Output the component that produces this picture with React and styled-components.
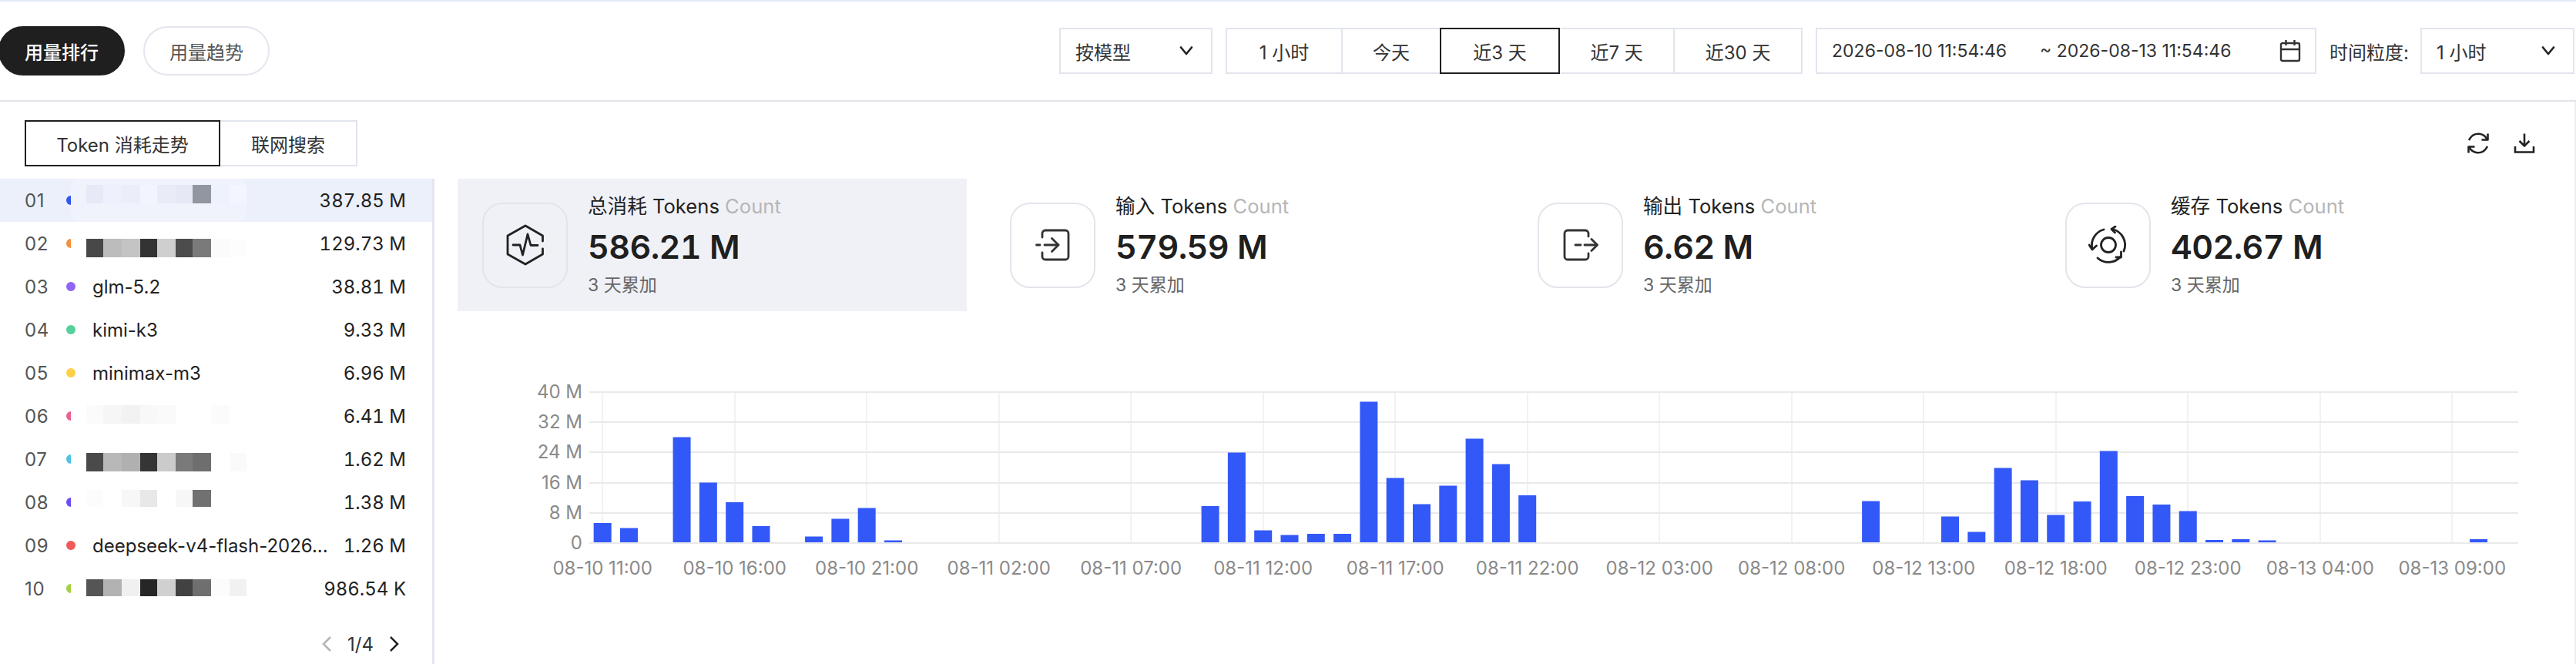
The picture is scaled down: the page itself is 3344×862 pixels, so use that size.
import React from "react";
import styled, { createGlobalStyle } from "styled-components";

const Global = createGlobalStyle`
  html, body { margin: 0; padding: 0; background: #fff; }
  body {
    font-family: Inter, "Noto Sans CJK SC", "Noto Sans", sans-serif;
    color: #222;
    overflow: hidden;
  }
  * { box-sizing: border-box; }
`;

const Page = styled.div`
  width: 3344px;
  height: 862px;
  overflow: hidden;
  border-top: 2px solid #e0e9fb;
  display: flex;
  flex-direction: column;
`;

const Header = styled.header`
  height: 130px;
  flex: none;
  border-bottom: 2px solid #e2e4ea;
  display: flex;
  align-items: center;
  padding-right: 2px;
`;

const PillGroup = styled.div`
  display: flex;
  gap: 24px;
  margin-left: -2px;
`;

const Pill = styled.div`
  width: 164px;
  height: 64px;
  border-radius: 32px;
  display: flex;
  align-items: center;
  justify-content: center;
  font-size: 24px;
  font-weight: ${(p) => (p.$active ? 500 : 400)};
  background: ${(p) => (p.$active ? "#1f1f1f" : "#fff")};
  color: ${(p) => (p.$active ? "#fff" : "#555")};
  border: 2px solid ${(p) => (p.$active ? "#1f1f1f" : "#e3e6ee")};
`;

const Controls = styled.div`
  margin-left: auto;
  display: flex;
  align-items: center;
`;

const SelectBox = styled.div`
  height: 60px;
  width: ${(p) => p.$width}px;
  border: 2px solid #e2e5ee;
  display: flex;
  align-items: center;
  justify-content: space-between;
  padding: 0 22px 0 19px;
  font-size: 24px;
  color: #333;
  margin-right: ${(p) => p.$mr || 0}px;
`;

const Segmented = styled.div`
  display: flex;
  height: 60px;
  margin-right: 17px;
`;

const Segment = styled.div`
  height: 60px;
  width: ${(p) => p.$width}px;
  margin-left: ${(p) => (p.$first ? 0 : -2)}px;
  position: relative;
  z-index: ${(p) => (p.$active ? 1 : 0)};
  display: flex;
  align-items: center;
  justify-content: center;
  font-size: 24px;
  color: #333;
  border: 2px solid ${(p) => (p.$active ? "#1f1f1f" : "#e2e5ee")};
`;

const DateRange = styled.div`
  width: 650px;
  height: 60px;
  border: 2px solid #e2e5ee;
  display: flex;
  align-items: center;
  padding-left: 19px;
  font-size: 23px;
  color: #333;
  margin-right: 17px;
`;

const DateText = styled.span`
  width: ${(p) => p.$width}px;
  flex: none;
  white-space: pre;
`;

const CalendarSlot = styled.span`
  margin-left: auto;
  margin-right: 18px;
  display: flex;
`;

const FieldLabel = styled.span`
  font-size: 24px;
  color: #333;
  margin-right: 15px;
  white-space: nowrap;
`;

const Body = styled.div`
  flex: 1;
  min-height: 0;
  display: flex;
  flex-direction: column;
  border-right: 2px solid #eceef2;
`;

const Toolbar = styled.div`
  height: 100px;
  flex: none;
  padding: 24px 51px 16px 32px;
  display: flex;
  align-items: center;
  justify-content: space-between;
`;

const Tabs = styled.div`
  display: flex;
`;

const Tab = styled.div`
  height: 60px;
  width: ${(p) => p.$width}px;
  margin-left: ${(p) => (p.$first ? 0 : -2)}px;
  position: relative;
  z-index: ${(p) => (p.$active ? 1 : 0)};
  display: flex;
  align-items: center;
  justify-content: center;
  font-size: 24px;
  color: #333;
  border: 2px solid ${(p) => (p.$active ? "#1f1f1f" : "#e2e5ee")};
`;

const Actions = styled.div`
  display: flex;
  align-items: center;
  gap: 31px;
`;

const Content = styled.div`
  flex: 1;
  min-height: 0;
  display: flex;
`;

const Sidebar = styled.aside`
  width: 564px;
  flex: none;
  border-right: 3px solid #e4e7ef;
  display: flex;
  flex-direction: column;
`;

const Row = styled.div`
  height: 56px;
  flex: none;
  position: relative;
  padding: 0 34px 0 32px;
  display: flex;
  align-items: center;
  font-size: 24px;
  background: ${(p) => (p.$active ? "#ecf0fb" : "transparent")};
`;

const Rank = styled.span`
  width: 54px;
  flex: none;
  color: #555;
  letter-spacing: 0.7px;
`;

const Dot = styled.span`
  width: 12px;
  height: 12px;
  flex: none;
  border-radius: 50%;
  background: ${(p) => p.$color};
  margin-right: 22px;
`;

const Name = styled.span`
  flex: none;
  color: #222;
  white-space: nowrap;
`;

const Value = styled.span`
  margin-left: auto;
  color: #222;
  white-space: nowrap;
  font-variant-numeric: tabular-nums;
`;

const MosaicLayer = styled.svg`
  position: absolute;
  left: 92px;
  top: 0;
  overflow: visible;
`;

const Pager = styled.div`
  height: 88px;
  flex: none;
  display: flex;
  align-items: center;
  justify-content: flex-end;
  padding-right: 42px;
  gap: 20px;
  font-size: 24px;
  color: #333;
`;

const Main = styled.main`
  flex: 1;
  min-width: 0;
  padding: 0 32px 0 30px;
  display: flex;
  flex-direction: column;
`;

const Cards = styled.div`
  display: grid;
  grid-template-columns: repeat(4, 1fr);
  gap: 24px;
`;

const Card = styled.div`
  height: 172px;
  padding: 0 32px;
  display: flex;
  align-items: center;
  gap: 26px;
  background: ${(p) => (p.$active ? "#f0f1f7" : "transparent")};
`;

const IconBox = styled.div`
  width: 111px;
  height: 111px;
  flex: none;
  border: 2px solid ${(p) => (p.$active ? "#e3e4ea" : "#e4e5ec")};
  border-radius: 26px;
  display: flex;
  align-items: center;
  justify-content: center;
`;

const CardText = styled.div`
  display: flex;
  flex-direction: column;
`;

const CardTitle = styled.div`
  font-size: 25.6px;
  line-height: 36px;
  color: #222;
  white-space: nowrap;
`;

const Muted = styled.span`
  color: #b6b6b6;
`;

const CardValue = styled.div`
  font-size: 43px;
  line-height: 56px;
  letter-spacing: -0.6px;
  margin-top: 6px;
  font-weight: 600;
  font-variant-numeric: tabular-nums;
  color: #1f1f1f;
  white-space: nowrap;
`;

const CardSub = styled.div`
  font-size: 23px;
  line-height: 34px;
  margin-top: 5px;
  color: #666;
`;

const ChartSvg = styled.svg`
  display: block;
  flex: none;
  font-family: Inter, "Noto Sans", sans-serif;
`;

const ChevronDown = () => (
  <svg width="20" height="14" viewBox="0 0 20 14" fill="none" stroke="#222" strokeWidth="2.6" strokeLinecap="round" strokeLinejoin="round">
    <path d="M3 2.5 L10 11 L17 2.5" />
  </svg>
);

const Calendar = () => (
  <svg width="28" height="30" viewBox="0 0 28 30" fill="none" stroke="#333" strokeWidth="2.4">
    <rect x="2" y="5" width="24" height="23" rx="2" />
    <path d="M2 13 H26 M8.5 1 V8 M19.5 1 V8" />
  </svg>
);

const Refresh = () => (
  <svg width="30" height="30" viewBox="0 0 30 30" fill="none" stroke="#222" strokeWidth="2.6" strokeLinejoin="round">
    <path d="M26.5 10 A12.6 12.6 0 0 0 4.6 8.4 L3 11" />
    <path d="M3.5 20 A12.6 12.6 0 0 0 25.4 21.6 L27 19" />
    <path d="M27.5 2.5 V10.5 H19.5" />
    <path d="M2.5 27.5 V19.5 H10.5" />
  </svg>
);

const Download = () => (
  <svg width="28" height="26" viewBox="0 0 28 26" fill="none" stroke="#222" strokeWidth="2.6">
    <path d="M14 0.5 V16.5" />
    <path d="M7.5 10 L14 16.5 L20.5 10" />
    <path d="M2 17 V24.5 H26 V17" />
  </svg>
);

const HexIcon = () => (
  <svg width="50" height="54" viewBox="0 0 50 54" fill="none" stroke="#222" strokeWidth="2.8" strokeLinejoin="round" strokeLinecap="round">
    <path d="M47.5 22 V15 L25 2 L2 15 V39 L25 52 L47.5 39 V32" />
    <path d="M9 27 H18 L21.5 40 L28 13 L32 27.5 H41" />
  </svg>
);

const EnterIcon = () => (
  <svg width="45" height="42" viewBox="0 0 45 42" fill="none" stroke="#333" strokeWidth="2.8" strokeLinecap="round" strokeLinejoin="round">
    <path d="M9 11 V6 A4 4 0 0 1 13 2 H39 A4 4 0 0 1 43 6 V36 A4 4 0 0 1 39 40 H13 A4 4 0 0 1 9 36 V31" />
    <path d="M1.5 21 H6 M12 21 H30" />
    <path d="M21.5 12.5 L30 21 L21.5 29.5" />
  </svg>
);

const ExitIcon = () => (
  <svg width="46" height="42" viewBox="0 0 46 42" fill="none" stroke="#333" strokeWidth="2.8" strokeLinecap="round" strokeLinejoin="round">
    <path d="M33 10 V6 A4 4 0 0 0 29 2 H6 A4 4 0 0 0 2 6 V36 A4 4 0 0 0 6 40 H29 A4 4 0 0 0 33 36 V32" />
    <path d="M16 21 H23 M28 21 H44" />
    <path d="M37 13.5 L44.5 21 L37 28.5" />
  </svg>
);

const CycleIcon = () => (
  <svg width="52" height="50" viewBox="0 0 52 50" fill="none" stroke="#222" strokeWidth="2.8" strokeLinecap="round" strokeLinejoin="round">
    <circle cx="26" cy="25" r="9.5" />
    <path d="M5 30 A21 21 0 0 1 20 5" />
    <path d="M1 25 L5 31 L10.5 26" />
    <path d="M31 4.5 A21 21 0 0 1 46 33" />
    <path d="M35 1 L30 4.5 L34.5 9" />
    <path d="M42 40 A21 21 0 0 1 12 42" />
    <path d="M42.5 34 L42.5 41 L36 41" />
  </svg>
);

const FAINT = "#fdfdfd";
const rows = [
  { rank: "01", color: "#2f55f5", value: "387.85 M", active: true, top: 8, h: 24, cover: "#f0f3fb",
    cells: ["#e6eaf6", "#eef1fb", "#ebeef8", "#f2f5fd", "#e9ecf6", "#e6e9f5", "#92969f", "#eef2fc", "#f3f6fe"] },
  { rank: "02", color: "#f58f3b", value: "129.73 M", top: 22, h: 24,
    cells: ["#484848", "#bcbcbc", "#c4c4c4", "#333333", "#cfcfcf", "#4c4c4c", "#7a7a7a", "#fbfbfb", FAINT] },
  { rank: "03", color: "#9064f5", name: "glm-5.2", value: "38.81 M" },
  { rank: "04", color: "#55cf9b", name: "kimi-k3", value: "9.33 M" },
  { rank: "05", color: "#fbd145", name: "minimax-m3", value: "6.96 M" },
  { rank: "06", color: "#f0608a", value: "6.41 M", top: 14, h: 24,
    cells: ["#fbfbfb", "#f6f6f6", "#f2f2f2", "#f8f8f8", "#fafafa", "#ffffff", "#ffffff", "#fbfbfb", "#ffffff"] },
  { rank: "07", color: "#4cc3e6", value: "1.62 M", top: 20, h: 24,
    cells: ["#4a4a4a", "#b8b8b8", "#b0b0b0", "#353535", "#cbcbcb", "#7a7a7a", "#6e6e6e", "#ffffff", "#fafafa"] },
  { rank: "08", color: "#6d4cf5", value: "1.38 M", top: 12, h: 22,
    cells: ["#fcfcfc", "#ffffff", "#f7f7f7", "#e8e8e8", "#ffffff", "#f7f7f7", "#717171", "#ffffff", "#ffffff"] },
  { rank: "09", color: "#f25a5a", name: "deepseek-v4-flash-2026...", value: "1.26 M" },
  { rank: "10", color: "#a4d23f", value: "986.54 K", top: 16, h: 22,
    cells: ["#555555", "#b2b2b2", "#f0f0f0", "#262626", "#d0d0d0", "#424242", "#6f6f6f", "#fcfcfc", "#f1f1f1"] },
];

const cellEdges = [20, 42, 66, 90, 112, 136, 158, 182, 206, 228];

const Mosaic = ({ row }) => (
  <MosaicLayer width="228" height="56" viewBox="0 0 228 56" aria-hidden="true">
    <rect x="0" y="0" width="228" height="56" rx="10" fill={row.cover || "#ffffff"} />
    {row.cells.map((c, i) => (
      <rect key={i} x={cellEdges[i]} y={row.top} width={cellEdges[i + 1] - cellEdges[i]} height={row.h} fill={c} />
    ))}
  </MosaicLayer>
);

const cards = [
  { title: "总消耗", value: "586.21 M", Icon: HexIcon, active: true },
  { title: "输入", value: "579.59 M", Icon: EnterIcon },
  { title: "输出", value: "6.62 M", Icon: ExitIcon },
  { title: "缓存", value: "402.67 M", Icon: CycleIcon },
];

const bars = {
  0: 25, 1: 18.5, 3: 136.5, 4: 77.5, 5: 52, 6: 21, 8: 7.5, 9: 30.5, 10: 44.5, 11: 2.5,
  23: 47, 24: 116.5, 25: 15.5, 26: 9.5, 27: 11, 28: 11, 29: 182.5, 30: 83.5, 31: 49.5,
  32: 73.5, 33: 134.5, 34: 101.5, 35: 61, 48: 53.5, 51: 33.5, 52: 13.5, 53: 96.5, 54: 80.5,
  55: 35.5, 56: 53, 57: 118.5, 58: 60, 59: 49, 60: 40.5, 61: 3, 62: 4, 63: 2.5, 71: 4,
};

const xLabels = [
  "08-10 11:00", "08-10 16:00", "08-10 21:00", "08-11 02:00", "08-11 07:00",
  "08-11 12:00", "08-11 17:00", "08-11 22:00", "08-12 03:00", "08-12 08:00",
  "08-12 13:00", "08-12 18:00", "08-12 23:00", "08-13 04:00", "08-13 09:00",
];
const yLabels = ["40 M", "32 M", "24 M", "16 M", "8 M", "0"];

// Chart origin on the page is x=594, y=404.
const LEFT = 171;
const RIGHT = 2675;
const TOP = 105;
const STEP_Y = 39.2;
const BASE = TOP + STEP_Y * 5;
const BAND = (RIGHT - LEFT) / 73;

const Chart = () => (
  <ChartSvg width="2716" height="356" viewBox="0 0 2716 356">
    {xLabels.map((_, i) => {
      const x = Math.round(LEFT + BAND * (i * 5 + 0.5));
      return <line key={i} x1={x} x2={x} y1={TOP} y2={BASE} stroke="#f2f2f2" strokeWidth="2" />;
    })}
    {yLabels.map((l, i) => {
      const y = Math.round(TOP + STEP_Y * i);
      return (
        <g key={l}>
          <line x1={LEFT} x2={RIGHT} y1={y} y2={y} stroke="#e9e9e9" strokeWidth="2" />
          <text x={LEFT - 9} y={y + 8} textAnchor="end" fontSize="24" fill="#8a8a8a">{l}</text>
        </g>
      );
    })}
    {Object.entries(bars).map(([i, h]) => (
      <rect
        key={i}
        x={LEFT + BAND * (Number(i) + 0.5) - 11.5}
        y={BASE - 1 - h}
        width="23"
        height={h}
        fill="#3358f8"
      />
    ))}
    {xLabels.map((l, i) => (
      <text key={l} x={LEFT + BAND * (i * 5 + 0.5)} y={342} textAnchor="middle" fontSize="24" fill="#8a8a8a">{l}</text>
    ))}
  </ChartSvg>
);

const segments = [
  { label: "1 小时", width: 152 },
  { label: "今天", width: 130 },
  { label: "近3 天", width: 156, active: true },
  { label: "近7 天", width: 151 },
  { label: "近30 天", width: 168 },
];

export default function App() {
  return (
    <Page>
      <Global />
      <Header>
        <PillGroup>
          <Pill $active>用量排行</Pill>
          <Pill>用量趋势</Pill>
        </PillGroup>
        <Controls>
          <SelectBox $width={199} $mr={17}>
            <span>按模型</span>
            <ChevronDown />
          </SelectBox>
          <Segmented>
            {segments.map((s, i) => (
              <Segment key={s.label} $first={i === 0} $width={s.width} $active={s.active}>{s.label}</Segment>
            ))}
          </Segmented>
          <DateRange>
            <DateText $width={270}>2026-08-10 11:54:46</DateText>
            <DateText $width={260}>~ 2026-08-13 11:54:46</DateText>
            <CalendarSlot><Calendar /></CalendarSlot>
          </DateRange>
          <FieldLabel>时间粒度:</FieldLabel>
          <SelectBox $width={200}>
            <span>1 小时</span>
            <ChevronDown />
          </SelectBox>
        </Controls>
      </Header>
      <Body>
        <Toolbar>
          <Tabs>
            <Tab $first $active $width={254}>Token 消耗走势</Tab>
            <Tab $width={180}>联网搜索</Tab>
          </Tabs>
          <Actions>
            <Refresh />
            <Download />
          </Actions>
        </Toolbar>
        <Content>
          <Sidebar>
            {rows.map((r) => (
              <Row key={r.rank} $active={r.active}>
                <Rank>{r.rank}</Rank>
                <Dot $color={r.color} />
                {r.name && <Name>{r.name}</Name>}
                <Value>{r.value}</Value>
                {r.cells && <Mosaic row={r} />}
              </Row>
            ))}
            <Pager>
              <svg width="14" height="22" viewBox="0 0 14 22" fill="none" stroke="#b5b5b5" strokeWidth="2.6"><path d="M12 2 L3 11 L12 20" /></svg>
              <span>1/4</span>
              <svg width="14" height="22" viewBox="0 0 14 22" fill="none" stroke="#222" strokeWidth="2.6"><path d="M2 2 L11 11 L2 20" /></svg>
            </Pager>
          </Sidebar>
          <Main>
            <Cards>
              {cards.map(({ title, value, Icon, active }) => (
                <Card key={title} $active={active}>
                  <IconBox $active={active}><Icon /></IconBox>
                  <CardText>
                    <CardTitle>{title} Tokens <Muted>Count</Muted></CardTitle>
                    <CardValue>{value}</CardValue>
                    <CardSub>3 天累加</CardSub>
                  </CardText>
                </Card>
              ))}
            </Cards>
            <Chart />
          </Main>
        </Content>
      </Body>
    </Page>
  );
}
